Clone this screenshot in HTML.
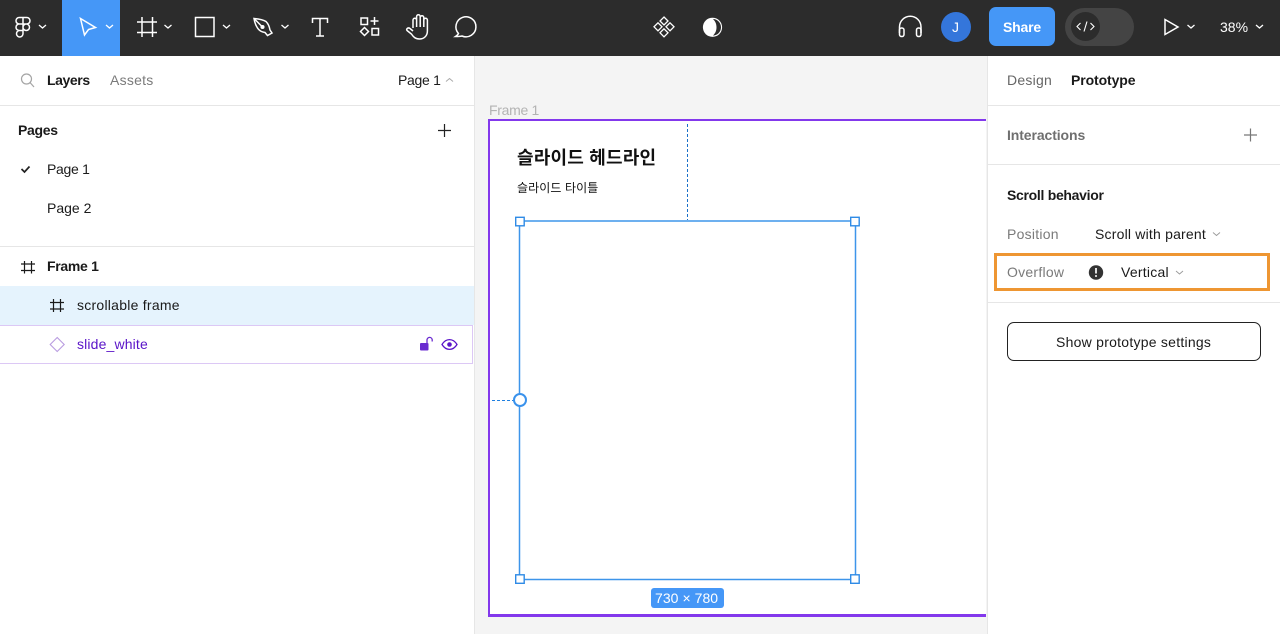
<!DOCTYPE html>
<html lang="ko"><head><meta charset="utf-8"><title>Figma</title>
<style>
html,body{margin:0;padding:0;width:1280px;height:634px;overflow:hidden;background:#fff}
body{position:relative;font-family:"Liberation Sans","Noto Sans CJK KR",sans-serif;font-size:14px;color:#1a1a1a}
div,span.t{position:absolute}
.t{white-space:nowrap;line-height:18px;letter-spacing:.25px}
.b{font-weight:700;letter-spacing:-.2px}
.g{color:#7a7a7a}
svg{position:absolute;left:0;top:0;pointer-events:none}
</style></head><body>
<div style="left:0;top:0;width:1280px;height:56px;background:#2c2c2c"></div>
<div style="left:62px;top:0;width:58px;height:56px;background:#4597f7"></div>
<div style="left:475px;top:56px;width:512px;height:578px;background:#f4f4f4"></div>
<div style="left:474px;top:56px;width:1px;height:578px;background:#e6e6e6"></div>
<div style="left:987px;top:56px;width:1px;height:578px;background:#e6e6e6"></div>
<div style="left:0;top:105px;width:474px;height:1px;background:#e6e6e6"></div>
<div style="left:0;top:246px;width:474px;height:1px;background:#e6e6e6"></div>
<div style="left:988px;top:105px;width:292px;height:1px;background:#e6e6e6"></div>
<div style="left:988px;top:164px;width:292px;height:1px;background:#e6e6e6"></div>
<div style="left:988px;top:302px;width:292px;height:1px;background:#e6e6e6"></div>
<div style="left:0;top:286px;width:474px;height:39px;background:#e5f3fd"></div>
<div style="left:-2px;top:325px;width:473px;height:37px;border:1px solid #dcc8f5;background:#fff"></div>
<div style="left:488px;top:119px;width:496px;height:493px;border:solid #8338ec;border-width:2px 0 3px 2px;background:#fff"></div>
<div style="left:994px;top:253px;width:270px;height:32px;border:3px solid #ee9632"></div>
<div style="left:1007px;top:322px;width:252px;height:37px;border:1px solid #222;border-radius:7px;background:#fff"></div>
<div style="left:989px;top:7px;width:66px;height:39px;border-radius:7px;background:#4597f7"></div>
<div style="left:1065px;top:8px;width:69px;height:38px;border-radius:19px;background:#444"></div>
<div style="left:1071px;top:12px;width:29px;height:29px;border-radius:50%;background:#2c2c2c"></div>
<div style="left:941px;top:12px;width:30px;height:30px;border-radius:50%;background:#3476db"></div>
<div style="left:651px;top:588px;width:73px;height:20px;border-radius:3px;background:#4597f7"></div>

<span class="t b" style="left:47px;top:71px;letter-spacing:-.4px">Layers</span>
<span class="t g" style="left:110px;top:71px">Assets</span>
<span class="t" style="left:398px;top:71px;letter-spacing:-.3px">Page 1</span>
<span class="t b" style="left:18px;top:121px;letter-spacing:-.3px">Pages</span>
<span class="t" style="left:47px;top:160px;letter-spacing:-.3px">Page 1</span>
<span class="t" style="left:47px;top:199px;letter-spacing:0">Page 2</span>
<span class="t b" style="left:47px;top:257px;letter-spacing:-.3px">Frame 1</span>
<span class="t" style="left:77px;top:296px">scrollable frame</span>
<span class="t" style="left:77px;top:335px;color:#5a14c8;letter-spacing:.15px">slide_white</span>
<span class="t" style="left:489px;top:101px;color:#b3b3b3;letter-spacing:-.3px">Frame 1</span>
<span class="t" style="left:517px;top:147px;font-size:18px;line-height:22px;font-weight:700;letter-spacing:.2px;color:#111">슬라이드 헤드라인</span>
<span class="t" style="left:517px;top:180px;font-size:12px;line-height:16px;letter-spacing:.1px;color:#111">슬라이드 타이틀</span>
<span class="t" style="left:655px;top:589px;color:#fff;letter-spacing:.05px">730 × 780</span>
<span class="t g" style="left:1007px;top:71px;color:#666">Design</span>
<span class="t b" style="left:1071px;top:71px;letter-spacing:-.1px">Prototype</span>
<span class="t b g" style="left:1007px;top:126px;color:#6f6f6f;letter-spacing:-.1px">Interactions</span>
<span class="t b" style="left:1007px;top:186px;letter-spacing:-.3px">Scroll behavior</span>
<span class="t g" style="left:1007px;top:225px">Position</span>
<span class="t" style="left:1095px;top:225px;letter-spacing:.2px">Scroll with parent</span>
<span class="t g" style="left:1007px;top:263px">Overflow</span>
<span class="t" style="left:1121px;top:263px">Vertical</span>
<span class="t" style="left:1056px;top:333px">Show prototype settings</span>
<span class="t b" style="left:1003px;top:18px;color:#fff;letter-spacing:-.2px">Share</span>
<span class="t" style="left:952px;top:18px;color:#fff">J</span>
<span class="t" style="left:1220px;top:18px;color:#fff;letter-spacing:0">38%</span>

<svg width="1280" height="634" viewBox="0 0 1280 634" fill="none">
<g stroke="#fff" stroke-width="1.5">
<!-- figma logo -->
<path d="M23 17.500H19.250a3.250 3.250 0 0 0 0 6.500H23zM23 17.500h3.750a3.250 3.250 0 0 1 0 6.500H23zM23 24h-3.750a3.250 3.250 0 0 0 0 6.500H23zM23 27.250a3.250 3.250 0 1 0 6.500 0a3.250 3.250 0 1 0-6.500 0zM23 30.500h-3.750a3.250 3.250 0 1 0 3.750 3.250z"/>
<path d="M39 25l3.500 3 3.500-3M106 25l3.500 3 3.500-3M164.500 25l3.500 3 3.500-3M223 25l3.500 3 3.500-3M281.500 25l3.500 3 3.500-3M1187.500 25l3.500 3 3.500-3M1256 25l3.500 3 3.500-3" stroke-width="1.300"/>
<!-- move -->
<path d="M80.500 18.500l15 9-7 2-4 5.500z"/>
<!-- frame -->
<path d="M137 22h20M137 32.500h20M142 17v20M152.500 17v20"/>
<!-- rect -->
<rect x="195.500" y="17.500" width="18.500" height="19"/>
<!-- pen -->
<path d="M254 18.500C259 19 263 19.500 266 21.500C268.500 24 269.500 27 270 30L272 33L267.500 35.500L265 32.500C261.500 32 259 30.500 257.500 28C255.500 25 254.500 21.500 254 18.500z"/>
<path d="M254.500 19l7.500 7.500"/><circle cx="262.500" cy="27" r="1.300" fill="#fff"/>
<!-- text -->
<path d="M312.500 23v-4.500h15v4.500M320 18.500v17.500M316 36h8"/>
<!-- resources -->
<rect x="361" y="18" width="6.500" height="6.500"/><rect x="372" y="28.500" width="6.500" height="6.500"/>
<path d="M374.500 17v8M370.500 21h8M364.500 27.500l4 4-4 4-4-4z"/>
<!-- hand -->
<path d="M413 28V20a1.800 1.800 0 0 1 3.600 0V16.500a1.800 1.800 0 0 1 3.600 0V17.500a1.800 1.800 0 0 1 3.600 0V20a1.800 1.800 0 0 1 3.600 0V31c0 5-3.500 8-8 8-4 0-6-2-8-5L407 30.500c-1-1.500 1-3.500 3-2L413 31M416.600 20V27M420.200 17.500V27M423.800 20V27"/>
<!-- comment -->
<path d="M458.500 33.500A10 10 0 1 1 462 36C460 36.500 458 36.500 455.500 36.500C457 35.500 458 34.500 458.500 33.500z"/>
<!-- components -->
<path d="M664 17l4 4-4 4-4-4zM658 22.800l4 4-4 4-4-4zM670 22.800l4 4-4 4-4-4zM664 28.800l4 4-4 4-4-4z" stroke-width="1.300"/>
<!-- contrast -->
<circle cx="712.500" cy="27.300" r="9.600" fill="#fff" stroke="none"/>
<path d="M713 19c4 0 8 3.500 8 8.300s-4 8.300-8 8.300c2.500-2.500 3.500-5 3.500-8.300s-1-5.800-3.500-8.300z" fill="#2c2c2c" stroke="none"/>
<!-- headphones -->
<path d="M899.500 33V27a10.750 10.750 0 0 1 21.500 0V33"/><rect x="899.500" y="28" width="4.500" height="8.500" rx="2"/><rect x="916.500" y="28" width="4.500" height="8.500" rx="2"/>
<!-- code -->
<path d="M1080.500 23l-3.500 3.500 3.500 3.500M1090.500 23l3.500 3.500-3.500 3.500M1087 21.500l-3 10" stroke-width="1.100"/>
<!-- play -->
<path d="M1165 19.500l13 7.500-13 7.500z"/>
</g>
<!-- left panel icons -->
<circle cx="26.500" cy="79" r="5" stroke="#a5a5a5" stroke-width="1.200"/><path d="M30 82.500l4 4.500" stroke="#a5a5a5" stroke-width="1.200"/>
<path d="M446 81.500l3.500-3 3.500 3" stroke="#aaa" stroke-width="1"/>
<path d="M438 130.500h13M444.500 124v13" stroke="#222" stroke-width="1.200"/>
<path d="M21.500 169l3 3 5-5.500" stroke="#222" stroke-width="1.700"/>
<path d="M21 264h14M21 270.500h14M24.500 261v12.500M31.500 261v12.500" stroke="#1a1a1a" stroke-width="1.200"/>
<path d="M50 302.500h14M50 309h14M53.500 299v13M60.500 299v13" stroke="#1a1a1a" stroke-width="1.200"/>
<path d="M57.200 337.500l7 7-7 7-7-7z" stroke="#b89be0" stroke-width="1.100"/>
<rect x="420" y="343" width="8.500" height="7.500" rx="1" fill="#6a2bd0"/><path d="M427 343v-3a2.600 2.600 0 0 1 5.200 0v1.500" stroke="#6a2bd0" stroke-width="1.300"/>
<path d="M442 344.500c4-6.500 11-6.500 15 0-4 6.500-11 6.500-15 0z" stroke="#5a14c8" stroke-width="1.300"/><circle cx="449.500" cy="344.500" r="2.300" fill="#5a14c8"/>
<!-- right panel -->
<path d="M1244 135h13M1250.500 128.500v13" stroke="#777" stroke-width="1.200"/>
<path d="M1213 232.500l3.500 3 3.500-3M1176 271l3.500 3 3.500-3" stroke="#999" stroke-width=".9"/>
<circle cx="1096" cy="272.500" r="7.200" fill="#333"/><path d="M1096 268v5.500" stroke="#fff" stroke-width="1.700"/><circle cx="1096" cy="276" r="1" fill="#fff"/>
<!-- canvas overlays -->
<rect x="519.500" y="221" width="336" height="358.500" stroke="#3d95ea" stroke-width="1.500"/>
<path d="M687.500 124v96" stroke="#1a70c8" stroke-dasharray="3 2"/>
<path d="M492 400.500h22" stroke="#1f7fe0" stroke-dasharray="3 2"/>
<circle cx="520" cy="400" r="6" fill="#fff" stroke="#3a92ec" stroke-width="2"/>
<g fill="#fff" stroke="#2f8be6" stroke-width="1.400">
<rect x="515.700" y="217.300" width="8.500" height="8.500"/><rect x="850.700" y="217.300" width="8.500" height="8.500"/>
<rect x="515.700" y="574.800" width="8.500" height="8.500"/><rect x="850.700" y="574.800" width="8.500" height="8.500"/>
</g>
</svg>
</body></html>
